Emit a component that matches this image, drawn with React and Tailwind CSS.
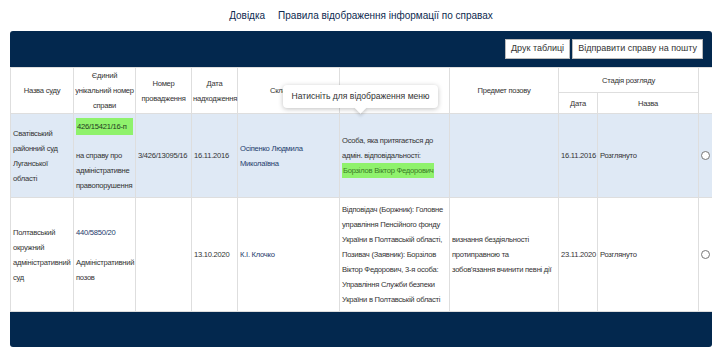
export default function App() {
  const th = "border border-[#dedede] px-[1px] py-0 font-normal text-center align-middle leading-[15px] whitespace-nowrap";
  const td = "border border-[#dedede] px-[2px] py-[3px] align-middle leading-[15px]";
  const link = "text-[#1d3b6b]";

  return (
    <div className="relative w-[727px] h-[351px] bg-white font-['Liberation_Sans',Arial,sans-serif] text-[#333]">
      {/* top links */}
      <div className="w-[702px] mx-[10px] h-[31px] flex items-center justify-center gap-[13px] text-[10px] text-[#0d2a4f]">
        <a>Довідка</a>
        <a>Правила відображення інформації по справах</a>
      </div>

      <div className="mx-[10px] w-[702px] bg-[#03284e] rounded-[3px] overflow-hidden">
        <div className="h-[36px] flex items-center justify-end gap-[2px] pr-[9px]">
          <button className="h-[20px] px-[5px] bg-white border border-[#bbb] text-[9px] text-[#333]">Друк таблиці</button>
          <button className="h-[20px] px-[5px] bg-white border border-[#bbb] text-[9px] text-[#333]">Відправити справу на пошту</button>
        </div>

        <table className="w-full table-fixed border-collapse bg-white text-[7.6px] tracking-[-0.25px]">
          <colgroup>
            <col className="w-[63px]" />
            <col className="w-[62px]" />
            <col className="w-[56px]" />
            <col className="w-[46px]" />
            <col className="w-[102px]" />
            <col className="w-[110px]" />
            <col className="w-[109px]" />
            <col className="w-[39px]" />
            <col className="w-[101px]" />
            <col className="w-[14px]" />
          </colgroup>
          <thead>
            <tr className="h-[25px]">
              <th rowSpan={2} className={th}>Назва суду</th>
              <th rowSpan={2} className={th}>Єдиний<br />унікальний номер<br />справи</th>
              <th rowSpan={2} className={th}>Номер<br />провадження</th>
              <th rowSpan={2} className={th}>Дата<br />надходження</th>
              <th rowSpan={2} className={th}>Склад суду</th>
              <th rowSpan={2} className={th}>Учасники</th>
              <th rowSpan={2} className={th}>Предмет позову</th>
              <th colSpan={2} className={th}>Стадія розгляду</th>
              <th rowSpan={2} className={th}></th>
            </tr>
            <tr className="h-[21px]">
              <th className={th}>Дата</th>
              <th className={th}>Назва</th>
            </tr>
          </thead>
          <tbody>
            <tr className="bg-[#dfe9f5] h-[84px]">
              <td className={td}>Сватівський<br />районний суд<br />Луганської<br />області</td>
              <td className={td}>
                <div className="bg-[#8ff26c] text-[#1f3a1f] px-[1px] leading-[17px]">426/15421/16-п</div>
                <div className="mt-[13px]">на справу про<br />адміністративне<br />правопорушення</div>
              </td>
              <td className={td}>3/426/13095/16</td>
              <td className={td}>16.11.2016</td>
              <td className={`${td} ${link}`}>Осіпенко Людмила<br />Миколаївна</td>
              <td className={`${td} whitespace-nowrap`}>
                Особа, яка притягається до<br />адмін. відповідальності:<br />
                <span className="inline-block bg-[#8ff26c] text-[#3a7a26] px-[1px]">Борзілов Віктор Федорович</span>
              </td>
              <td className={td}></td>
              <td className={`${td} px-[1px]`}>16.11.2016</td>
              <td className={td}>Розглянуто</td>
              <td className={`${td} px-0`}>
                <div className="mx-auto w-[9px] h-[9px] rounded-full border border-[#777] bg-white" />
              </td>
            </tr>
            <tr className="h-[114px]">
              <td className={td}>Полтавський<br />окружний<br />адміністративний<br />суд</td>
              <td className={td}>
                <div className={link}>440/5850/20</div>
                <div className="mt-[15px]">Адміністративний<br />позов</div>
              </td>
              <td className={td}></td>
              <td className={td}>13.10.2020</td>
              <td className={`${td} ${link}`}>К.І. Клочко</td>
              <td className={`${td} whitespace-nowrap`}>
                Відповідач (Боржник): Головне<br />
                управління Пенсійного фонду<br />
                України в Полтавській області,<br />
                Позивач (Заявник): Борзілов<br />
                Віктор Федорович, 3-я особа:<br />
                Управління Служби безпеки<br />
                України в Полтавській області
              </td>
              <td className={`${td} whitespace-nowrap`}>
                визнання бездіяльності<br />
                протиправною та<br />
                зобов'язання вчинити певні дії
              </td>
              <td className={`${td} px-[1px]`}>23.11.2020</td>
              <td className={td}>Розглянуто</td>
              <td className={`${td} px-0`}>
                <div className="mx-auto w-[9px] h-[9px] rounded-full border border-[#777] bg-white" />
              </td>
            </tr>
          </tbody>
        </table>

        <div className="h-[35px]" />
      </div>

      {/* tooltip */}
      <div className="absolute left-[283px] top-[85px] w-[155px] h-[23px] bg-white rounded-[4px] shadow-[0_1px_5px_rgba(0,0,0,0.25)] flex items-center justify-center text-[8.6px] text-[#333]">
        <div className="absolute left-[73px] bottom-[-4px] w-[9px] h-[9px] bg-white rotate-45 shadow-[2px_2px_3px_rgba(0,0,0,0.12)]" />
        <span className="relative">Натисніть для відображення меню</span>
      </div>
    </div>
  );
}
